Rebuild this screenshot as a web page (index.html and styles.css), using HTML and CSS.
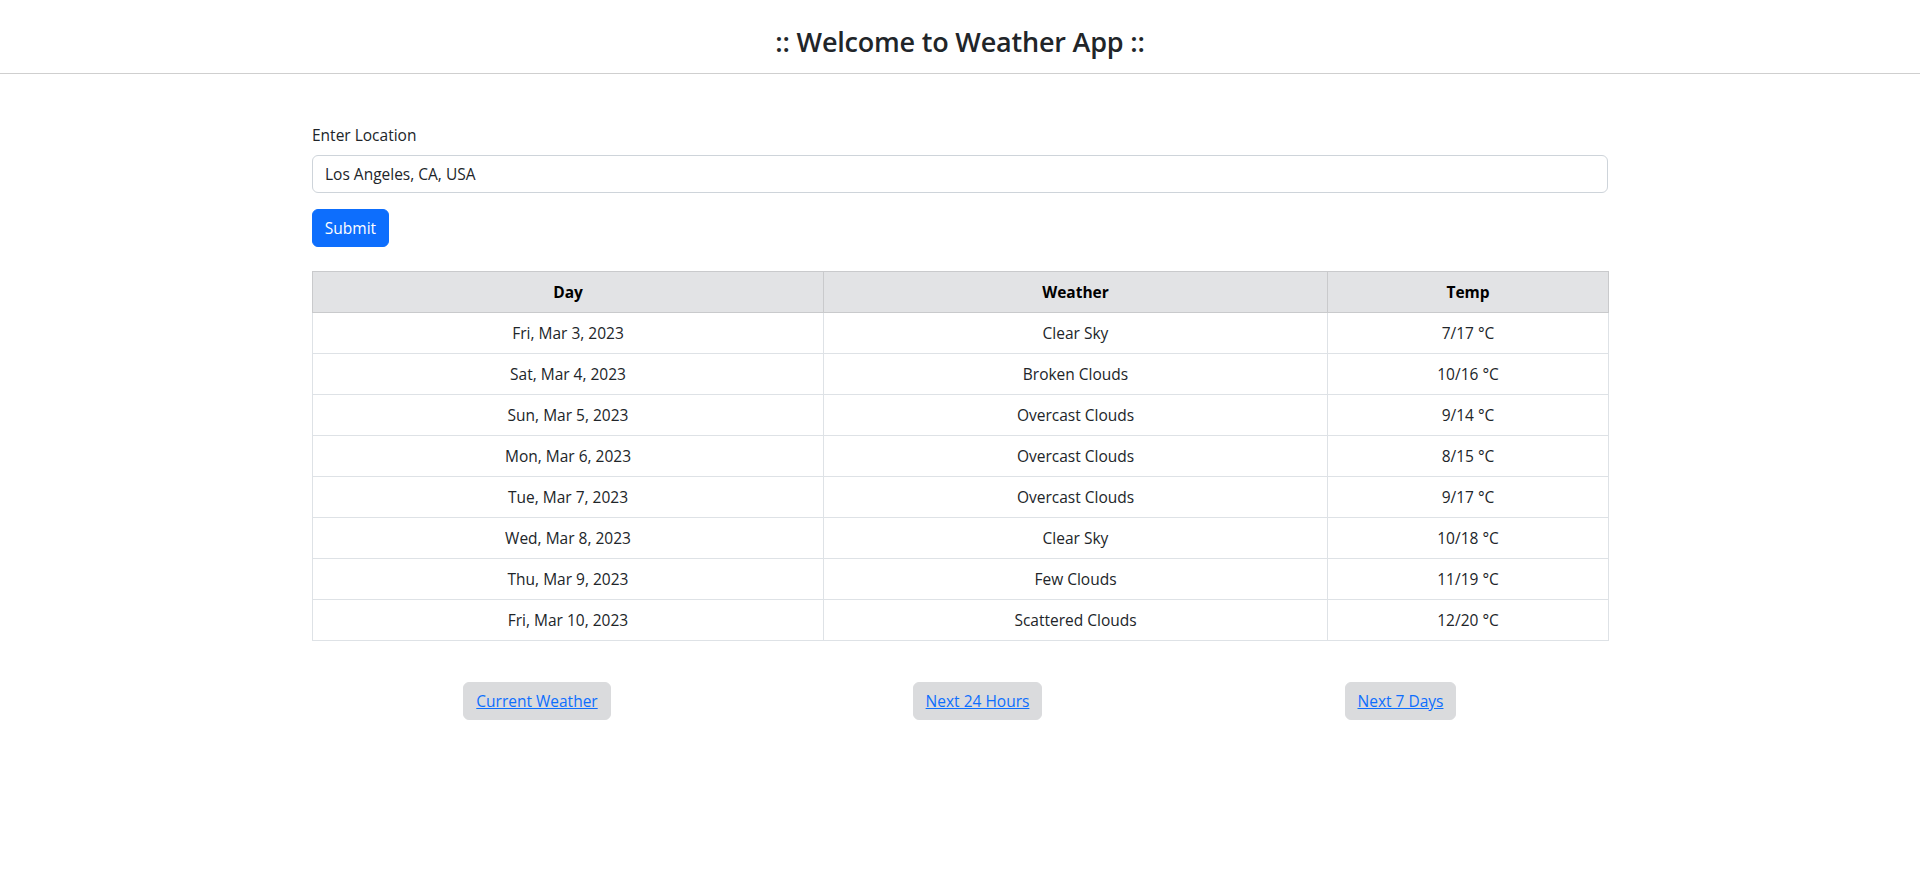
FILE: index.html
```html
<!DOCTYPE html>
<html lang="en">
<head>
<meta charset="utf-8">
<title>Weather App</title>
<link rel="stylesheet" href="styles.css">
</head>
<body>
<header class="app-header">
  <h3 class="app-title">:: Welcome to Weather App ::</h3>
</header>
<main class="container">
  <form class="location-form">
    <label class="form-label" for="loc">Enter Location</label>
    <input class="form-control" id="loc" type="text" value="Los Angeles, CA, USA">
    <button class="btn-submit" type="button">Submit</button>
  </form>
  <table class="forecast">
    <colgroup>
      <col class="col-day">
      <col class="col-weather">
      <col class="col-temp">
    </colgroup>
    <thead>
      <tr><th>Day</th><th>Weather</th><th>Temp</th></tr>
    </thead>
    <tbody>
      <tr><td>Fri, Mar 3, 2023</td><td>Clear Sky</td><td>7/17 &deg;C</td></tr>
      <tr><td>Sat, Mar 4, 2023</td><td>Broken Clouds</td><td>10/16 &deg;C</td></tr>
      <tr><td>Sun, Mar 5, 2023</td><td>Overcast Clouds</td><td>9/14 &deg;C</td></tr>
      <tr><td>Mon, Mar 6, 2023</td><td>Overcast Clouds</td><td>8/15 &deg;C</td></tr>
      <tr><td>Tue, Mar 7, 2023</td><td>Overcast Clouds</td><td>9/17 &deg;C</td></tr>
      <tr><td>Wed, Mar 8, 2023</td><td>Clear Sky</td><td>10/18 &deg;C</td></tr>
      <tr><td>Thu, Mar 9, 2023</td><td>Few Clouds</td><td>11/19 &deg;C</td></tr>
      <tr><td>Fri, Mar 10, 2023</td><td>Scattered Clouds</td><td>12/20 &deg;C</td></tr>
    </tbody>
  </table>
  <nav class="view-links">
    <a class="view-link" href="#">Current Weather</a>
    <a class="view-link" href="#">Next 24 Hours</a>
    <a class="view-link" href="#">Next 7 Days</a>
  </nav>
</main>
</body>
</html>
```

FILE: styles.css
```css
* { box-sizing: border-box; }

html, body {
  margin: 0;
  padding: 0;
  background: #fff;
}

body {
  font-family: "Open Sans", "Noto Sans", sans-serif;
  font-size: 15.5px;
  line-height: 1.5;
  color: #212529;
}

.app-header {
  border-bottom: 1px solid #cfcfcf;
  padding: 25px 0 14px;
  text-align: center;
}

.app-title {
  margin: 0;
  font-size: 27px;
  font-weight: 600;
  line-height: 34px;
  color: #212529;
  letter-spacing: -0.2px;
}

.container {
  width: 1296px;
  margin: 0 auto;
  padding-top: 49px;
}

.location-form {
  display: flex;
  flex-direction: column;
  align-items: flex-start;
}

.form-label {
  display: block;
  margin-bottom: 8px;
  line-height: 24px;
}

.form-control {
  display: block;
  width: 100%;
  height: 38px;
  padding: 6px 12px;
  font-family: inherit;
  font-size: 15.5px;
  color: #212529;
  background: #fff;
  border: 1px solid #ced4da;
  border-radius: 6px;
  margin-bottom: 16px;
  outline: none;
}

.btn-submit {
  height: 38px;
  width: 77px;
  padding: 0;
  font-family: inherit;
  font-size: 15.5px;
  color: #fff;
  background: #0d6efd;
  border: 1px solid #0d6efd;
  border-radius: 6px;
}

.forecast {
  width: 100%;
  margin-top: 24px;
  border-collapse: collapse;
  table-layout: fixed;
}

.col-day { width: 511px; }
.col-weather { width: 504px; }
.col-temp { width: 281px; }

.forecast th,
.forecast td {
  text-align: center;
  padding: 8px;
  line-height: 24px;
  border: 1px solid #dee2e6;
}

.forecast th {
  background: #e2e3e5;
  border-color: #c9cacc;
  font-weight: 700;
  color: #000;
}

.view-links {
  display: grid;
  grid-template-columns: 474px 407px 439px;
  justify-items: center;
  margin: 41px -12px 0;
}

.view-link {
  display: block;
  height: 38px;
  padding: 0 12px;
  line-height: 36px;
  white-space: nowrap;
  color: #0d6efd;
  background: #dadbdd;
  border: 1px solid #dadbdd;
  border-radius: 6px;
  text-decoration: underline;
}
```
